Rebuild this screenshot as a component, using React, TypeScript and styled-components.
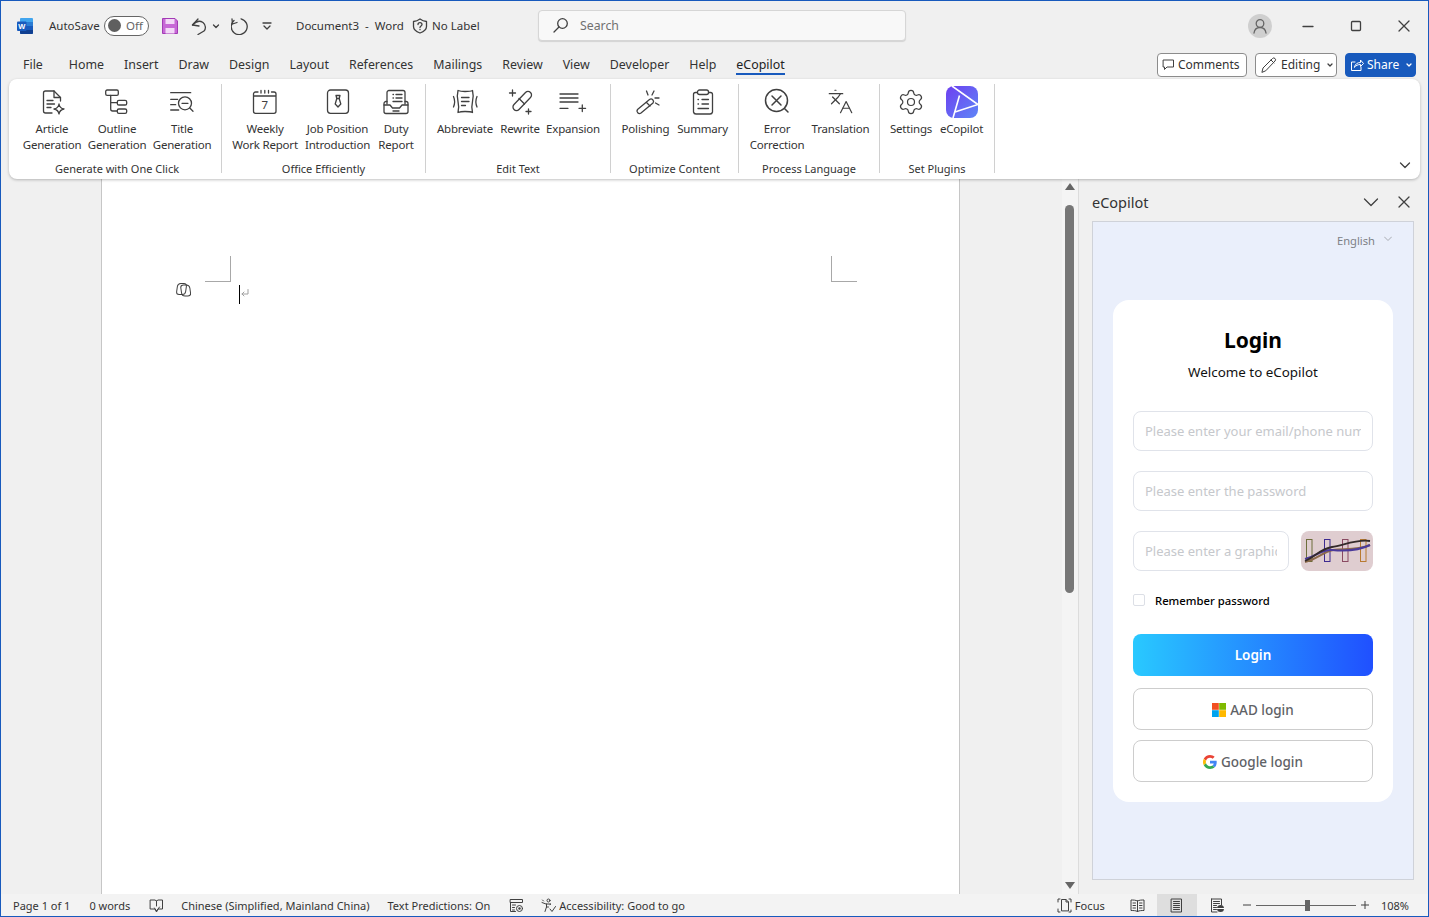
import React from 'react';
import styled, { createGlobalStyle } from 'styled-components';
import { Languages, Settings } from 'lucide-react';

const GlobalStyle = createGlobalStyle`
  html, body, #root {
    margin: 0;
    height: 100%;
    overflow: hidden;
  }
  * {
    box-sizing: border-box;
  }
  body {
    font-family: 'Noto Sans', 'Open Sans', sans-serif;
    color: #333;
  }
`;

const Icon = styled.svg.attrs<{ stroke?: string; strokeWidth?: number | string }>((p) => ({
  fill: 'none',
  stroke: p.stroke ?? '#404040',
  strokeWidth: p.strokeWidth ?? 1.3,
  strokeLinecap: 'round',
  strokeLinejoin: 'round',
}))`
  display: block;
  flex: none;
`;

const Ico = ({ s = 28, children }: { s?: number; children: React.ReactNode }) => (
  <Icon width={s} height={s} viewBox={`0 0 ${s} ${s}`}>
    {children}
  </Icon>
);

const ribbonGroups = [
  {
    label: 'Generate with One Click',
    gap: 7,
    items: [
      {
        w: 58,
        text: ['Article', 'Generation'],
        icon: (
          <Ico>
            <path d="M14 25H7.500a2 2 0 0 1-2-2V5a2 2 0 0 1 2-2H16l6.500 6.500v3.500" />
            <path d="M16 3v6.500h6.500M9 12.500h6M9 16h7.500M9 19.500h4" />
            <path d="M21 16c.5 3 2 4.500 5 5-3 .5-4.500 2-5 5-.5-3-2-4.500-5-5 3-.5 4.500-2 5-5z" />
          </Ico>
        ),
      },
      {
        w: 58,
        text: ['Outline', 'Generation'],
        icon: (
          <Ico>
            <rect x="2.700" y="2" width="12.600" height="5.400" rx="1.400" />
            <rect x="14.300" y="12.400" width="9.400" height="4.600" rx="1.600" />
            <rect x="14.300" y="21" width="9.400" height="4.400" rx="1.600" />
            <path d="M7.700 7.400V21a2 2 0 0 0 2 2h4.600M7.700 14.700h6.600" />
          </Ico>
        ),
      },
      {
        w: 58,
        text: ['Title', 'Generation'],
        icon: (
          <Ico>
            <path d="M2.700 4.700h20M2.700 11.300h7M2.700 16.700h5M2.700 22h8" />
            <circle cx="17" cy="15.300" r="6.500" />
            <path d="M14 15.300h6M21.800 20l3.200 3.200" />
          </Ico>
        ),
      },
    ],
  },
  {
    label: 'Office Efficiently',
    gap: 7,
    items: [
      {
        w: 66,
        text: ['Weekly', 'Work Report'],
        icon: (
          <Ico>
            <path d="M7 4H4.500a2 2 0 0 0-2 2v17.300a2 2 0 0 0 2 2h18.500a2 2 0 0 0 2-2V6a2 2 0 0 0-2-2h-2.500M2.500 8h22.500" />
            <path d="M10 2.500V5M13.800 2.500V5M17.500 2.500V5" />
            <text x="13.800" y="21" fontSize="11.500" fill="#404040" stroke="none" textAnchor="middle" fontFamily="Noto Sans">7</text>
          </Ico>
        ),
      },
      {
        w: 65,
        text: ['Job Position', 'Introduction'],
        icon: (
          <Ico>
            <rect x="3.500" y="2" width="21" height="23.300" rx="3" />
            <path d="M12 7.500h4l-.8 3 1.600 5.500-2.800 3-2.800-3 1.600-5.500z" />
            <path d="M12.800 10.500h2.400" />
          </Ico>
        ),
      },
      {
        w: 38,
        text: ['Duty', 'Report'],
        icon: (
          <Ico>
            <path d="M5 16V4.500a2 2 0 0 1 2-2h14a2 2 0 0 1 2 2V16" />
            <path d="M11 6.500h.5M14 6.500h6M11 10h.5M14 10h6M11 13.500h9" />
            <path d="M5 13.500H4a2 2 0 0 0-2 2v8a2 2 0 0 0 2 2h20a2 2 0 0 0 2-2v-8a2 2 0 0 0-2-2h-1" />
            <path d="M2 17h6l2.500 3h7L20 17h6M11 23h6" />
          </Ico>
        ),
      },
    ],
  },
  {
    label: 'Edit Text',
    gap: 6,
    items: [
      {
        w: 58,
        text: ['Abbreviate'],
        icon: (
          <Ico>
            <path d="M7 2.500c2 .8 3 1 7 1s6-.2 7.500-1c1 4 1 7 0 11s-1 6.500 0 11c-1.500-.8-3.500-1-7.500-1s-5 .2-7 1c1-4.500 1-7 0-11s-1-7 0-11z" />
            <path d="M10.500 9.500h7.500M10.500 13.500h7.500M10.500 17.500h4" />
            <path d="M2.500 8.500c1.500 3.500 1.500 7 0 10.500M26 8.500c-1.500 3.500-1.500 7 0 10.500" />
          </Ico>
        ),
      },
      {
        w: 40,
        text: ['Rewrite'],
        icon: (
          <Ico>
            <path d="M19.500 4.500a3.500 3.500 0 0 1 5 5L13 21.500a3.500 3.500 0 0 1-5-5z" />
            <path d="M13 10.500l5.500 5.500" />
            <path d="M6.500 2v6M3.500 5h6M22.500 21v5M20 23.500h5" />
          </Ico>
        ),
      },
      {
        w: 54,
        text: ['Expansion'],
        icon: (
          <Ico>
            <path d="M1 6h18M1 10h18M1 14h18M1 20.300h8M23.300 17v6.600M20 20.300h6.600" />
          </Ico>
        ),
      },
    ],
  },
  {
    label: 'Optimize Content',
    gap: 7,
    items: [
      {
        w: 49,
        text: ['Polishing'],
        icon: (
          <Ico>
            <path d="M17.500 11.500a2.500 2.500 0 0 1 3.500 3.500L9 25a2.500 2.500 0 0 1-3.500-3.500z" />
            <path d="M14.500 14.500l3.500 3.500" />
            <path d="M14.500 3l1.500 4M22 3l-2 4M27 10h-4M27 17l-3.500-2" />
          </Ico>
        ),
      },
      {
        w: 51,
        text: ['Summary'],
        icon: (
          <Ico>
            <path d="M8 4.500H6.500a2 2 0 0 0-2 2V24a2.500 2.500 0 0 0 2.500 2h14a2.500 2.500 0 0 0 2.500-2V6.500a2 2 0 0 0-2-2H20" />
            <rect x="8.500" y="2" width="11" height="4.500" rx="2" />
            <path d="M9 11.500h.5M13 11.500h6.500M9 16h.5M13 16h6.500M9 20.500h10.500" />
          </Ico>
        ),
      },
    ],
  },
  {
    label: 'Process Language',
    gap: 7,
    items: [
      {
        w: 56,
        text: ['Error', 'Correction'],
        icon: (
          <Ico>
            <circle cx="13.500" cy="12.500" r="11" strokeWidth="1.500" />
            <path d="M9 8l9 9M18 8l-9 9M21.500 20.500l3.500 3.500" strokeWidth="1.500" />
          </Ico>
        ),
      },
      {
        w: 57,
        text: ['Translation'],
        icon: <Languages size={27} strokeWidth={1.05} color="#404040" />,
      },
    ],
  },
  {
    label: 'Set Plugins',
    gap: 7,
    items: [
      {
        w: 42,
        text: ['Settings'],
        icon: <Settings size={28} strokeWidth={1.05} color="#404040" />,
      },
      {
        w: 45,
        text: ['eCopilot'],
        logo: true,
        icon: (
          <svg width="32" height="32" viewBox="0 0 32 32" style={{ display: 'block' }}>
            <defs>
              <linearGradient id="ecopilotGrad" x1="0" y1="0" x2="1" y2="1">
                <stop offset="0" stopColor="#6d3ff0" />
                <stop offset="1" stopColor="#5f86f7" />
              </linearGradient>
            </defs>
            <rect width="32" height="32" rx="8" fill="url(#ecopilotGrad)" />
            <path d="M6 0l26 18.500L9 26M13.500 9.500L7 32" fill="none" stroke="#fff" strokeWidth="1.600" />
          </svg>
        ),
      },
    ],
  },
];

const tabs = ['Home', 'Insert', 'Draw', 'Design', 'Layout', 'References', 'Mailings', 'Review', 'View', 'Developer', 'Help'];

const Window = styled.div`
  width: 1429px;
  height: 917px;
  display: flex;
  flex-direction: column;
  background: #f0f0f0;
  border: 1px solid #185abd;
  overflow: hidden;
`;

const TitleBar = styled.div`
  height: 49px;
  flex: none;
  display: flex;
  align-items: center;
  padding-left: 16px;
  font-size: 11.500px;
  color: #333;
  white-space: nowrap;

  & > * {
    flex: none;
  }
`;

const AutoSave = styled.span`
  margin-left: 16px;
  width: 48px;
`;

const Toggle = styled.div`
  margin-left: 7px;
  width: 45px;
  height: 20px;
  border: 1px solid #666;
  border-radius: 10px;
  background: #fff;
  display: flex;
  align-items: center;
  padding-left: 3px;
  gap: 5px;
  font-size: 11.500px;
  color: #666;

  &::before {
    content: '';
    width: 13px;
    height: 13px;
    border-radius: 50%;
    background: #5f5f5f;
  }
`;

const QuickSlot = styled.div<{ $ml: number }>`
  margin-left: ${(p) => p.$ml}px;
  display: flex;
  align-items: center;
`;

const DocTitle = styled.span`
  margin-left: 24px;
  width: 108px;
  white-space: pre;
`;

const NoLabel = styled.span`
  margin-left: 4px;
  width: 47px;
`;

const SearchBox = styled.div`
  margin-left: 59px;
  width: 368px;
  height: 31px;
  background: #f8f8f8;
  border: 1px solid #d6d6d6;
  border-radius: 4px;
  box-shadow: 0 1px 1px rgba(0, 0, 0, 0.12);
  display: flex;
  align-items: center;
  padding-left: 13px;
  gap: 11px;
  color: #707070;
  font-size: 12.300px;
`;

const Avatar = styled.div`
  margin-left: 342px;
  width: 24px;
  height: 24px;
  border-radius: 50%;
  background: #cfcfcf;
  display: flex;
  align-items: center;
  justify-content: center;
`;

const WinControls = styled.div`
  display: flex;
  margin-left: 12px;
`;

const WinButton = styled.div`
  width: 48px;
  display: flex;
  justify-content: center;
`;

const TabRow = styled.div`
  height: 29px;
  flex: none;
  display: flex;
  align-items: center;
  padding: 0 12px 0 22px;
  font-size: 12.400px;
  color: #333;
`;

const FileTab = styled.span`
  margin-right: 26px;
`;

const Tab = styled.span<{ $active?: boolean }>`
  margin-right: 20px;
  white-space: nowrap;
  color: #333;
  ${(p) => p.$active && 'color: #222; border-bottom: 2px solid #185abd; margin-bottom: -2px;'}
`;

const TabActions = styled.div`
  margin-left: auto;
  display: flex;
  gap: 8px;
  align-items: center;
`;

const ActionButton = styled.div<{ $primary?: boolean; $w: number }>`
  width: ${(p) => p.$w}px;
  height: 24px;
  border-radius: 4px;
  border: 1px solid ${(p) => (p.$primary ? '#185abd' : '#8c8c8c')};
  background: ${(p) => (p.$primary ? '#185abd' : '#fff')};
  color: ${(p) => (p.$primary ? '#fff' : '#333')};
  display: flex;
  align-items: center;
  gap: 3px;
  padding-left: 4px;
  font-size: 12px;
`;

const ActionChevron = styled.span`
  margin-left: 3px;
`;

const Ribbon = styled.div`
  height: 100px;
  flex: none;
  margin: 0 8px;
  background: #fff;
  border-radius: 8px;
  box-shadow: 0 1px 3px rgba(0, 0, 0, 0.25);
  display: flex;
  padding: 5px 0 0 4px;
  position: relative;
  z-index: 1;
`;

const RibbonGroup = styled.div`
  height: 89px;
  padding: 0 10px;
  border-right: 1px solid #d0d0d0;
  display: flex;
  flex-direction: column;
  align-items: center;
`;

const GroupItems = styled.div<{ $gap: number }>`
  flex: 1;
  display: flex;
  gap: ${(p) => p.$gap}px;
`;

const GroupLabel = styled.div`
  font-size: 11px;
  line-height: 16px;
  height: 12px;
  white-space: nowrap;
  color: #333;
`;

const RibbonButton = styled.div<{ $w: number }>`
  width: ${(p) => p.$w}px;
  display: flex;
  flex-direction: column;
  align-items: center;
  font-size: 11.500px;
  letter-spacing: -0.2px;
  line-height: 16px;
  color: #333;
`;

const IconSlot = styled.div<{ $logo?: boolean }>`
  height: 32px;
  padding-top: ${(p) => (p.$logo ? 0 : 4)}px;
  margin-top: ${(p) => (p.$logo ? 2 : 0)}px;
  margin-bottom: ${(p) => (p.$logo ? 3 : 5)}px;
`;

const Label = styled.div`
  white-space: nowrap;
  text-align: center;
`;

const RibbonCollapse = styled.div`
  margin-left: auto;
  align-self: flex-end;
  padding: 0 9px 8px 0;
`;

const Main = styled.div`
  flex: 1;
  min-height: 0;
  display: flex;
`;

const DocArea = styled.div`
  width: 1061px;
  padding-left: 100px;
  flex: none;
  display: flex;
`;

const Page = styled.div`
  width: 859px;
  background: #fff;
  border: solid #c6c6c6;
  border-width: 0 1px;
  padding: 77px 102px 0 73px;
`;

const CropRow = styled.div`
  margin-left: 30px;
  display: flex;
  justify-content: space-between;
`;

const CropMark = styled.div<{ $right?: boolean }>`
  width: 26px;
  height: 26px;
  border-bottom: 1px solid #a8a8a8;
  ${(p) => (p.$right ? 'border-left' : 'border-right')}: 1px solid #a8a8a8;
`;

const TextLine = styled.div`
  display: flex;
  align-items: flex-start;
`;

const Cursor = styled.div`
  margin: 3px 0 0 48px;
  width: 1px;
  height: 19px;
  background: #000;
`;

const ReturnMark = styled.div`
  margin: 7px 0 0 1px;
`;

const ScrollColumn = styled.div`
  width: 16px;
  flex: none;
  background: #f4f4f4;
  display: flex;
  flex-direction: column;
  align-items: center;
  padding: 4px 1px 5px 0;
`;

const ScrollThumb = styled.div`
  width: 9px;
  height: 388px;
  margin-top: 15px;
  border-radius: 5px;
  background: #777;
`;

const ScrollArrow = styled.div<{ $down?: boolean }>`
  width: 0;
  height: 0;
  border-left: 5px solid transparent;
  border-right: 5px solid transparent;
  ${(p) => (p.$down ? 'border-top' : 'border-bottom')}: 7px solid #666;
  ${(p) => p.$down && 'margin-top: auto;'}
`;

const Panel = styled.div`
  flex: 1;
  border-left: 1px solid #dcdcdc;
  display: flex;
  flex-direction: column;
  padding: 0 14px 14px 13px;
`;

const PanelHeader = styled.div`
  height: 42px;
  flex: none;
  display: flex;
  align-items: center;
  font-size: 14.500px;
  color: #333;
  padding-top: 3px;
`;

const PanelActions = styled.div`
  margin-left: auto;
  display: flex;
  align-items: center;
  gap: 19px;
  padding-right: 4px;
`;

const PanelBody = styled.div`
  flex: 1;
  background: #eaeffb;
  border: 1px solid #cfd2d9;
  padding: 0 20px;
`;

const LangRow = styled.div`
  height: 78px;
  padding: 10px 1px 0 0;
  display: flex;
  justify-content: flex-end;
  align-items: flex-start;
  gap: 9px;
  font-size: 11.200px;
  line-height: 18px;
  color: #7d7f85;
`;

const Card = styled.div`
  height: 502px;
  background: #fff;
  border-radius: 16px;
  padding: 0 20px;
  display: flex;
  flex-direction: column;
`;

const CardTitle = styled.h1`
  margin: 24px 0 0;
  font-size: 21px;
  line-height: 32px;
  font-weight: 700;
  text-align: center;
  color: #000;
`;

const CardSubtitle = styled.p`
  margin: 8px 0 0;
  font-size: 13.400px;
  line-height: 16px;
  text-align: center;
  color: #111;
`;

const Input = styled.input`
  display: block;
  width: 100%;
  min-width: 0;
  height: 40px;
  flex: 1 1 0;
  padding: 0 11px;
  border: 1px solid #e0e3ea;
  border-radius: 8px;
  background: #fff;
  font-family: inherit;
  font-size: 13px;
  outline: none;

  &::placeholder {
    color: #c6c8cc;
    opacity: 1;
  }
`;

const Fields = styled.div`
  margin-top: 31px;
  display: flex;
  flex-direction: column;
  gap: 20px;
`;

const FieldRow = styled.div`
  height: 40px;
  display: flex;
  gap: 12px;
`;

const CaptchaImage = styled.div`
  width: 72px;
  height: 40px;
  flex: none;
  border-radius: 8px;
  background: #dfcdd0;
  overflow: hidden;
`;

const RememberRow = styled.label`
  margin-top: 21px;
  height: 16px;
  display: flex;
  align-items: center;
  font-size: 11.300px;
  font-weight: 500;
  color: #000;
`;

const Checkbox = styled.span`
  width: 12px;
  height: 12px;
  margin-right: 10px;
  border: 1px solid #dcdfe6;
  border-radius: 2px;
`;

const LoginButton = styled.button`
  margin-top: 26px;
  height: 42px;
  flex: none;
  border: 0;
  border-radius: 8px;
  background: linear-gradient(90deg, #29c9ff, #2050ff);
  color: #fff;
  font-family: inherit;
  font-size: 13.500px;
  font-weight: 600;
`;

const SsoButton = styled.button`
  margin-top: 12px;
  height: 42px;
  flex: none;
  padding: 2px 0 0;
  border: 1px solid #cdcdcd;
  border-radius: 8px;
  background: #fff;
  color: #606266;
  font-family: inherit;
  font-size: 13.500px;
  font-weight: 500;
  display: flex;
  align-items: center;
  justify-content: center;
  gap: 4px;

  & + & {
    margin-top: 10px;
  }
`;

const StatusBar = styled.div`
  height: 22px;
  flex: none;
  background: #f3f3f3;
  display: flex;
  align-items: center;
  font-size: 11px;
  color: #333;
  white-space: nowrap;
`;

const StatusItem = styled.span<{ $ml: number }>`
  margin-left: ${(p) => p.$ml}px;
  display: flex;
  flex: none;
  align-items: center;
`;

const StatusSpacer = styled.div`
  flex: 1;
`;

const AccessText = styled.span`
  margin-left: 3px;
`;

const FocusText = styled.span`
  margin-left: 3px;
  letter-spacing: 0.1px;
`;

const ViewButton = styled.div<{ $active?: boolean; $ml: number }>`
  margin-left: ${(p) => p.$ml}px;
  width: 40px;
  height: 22px;
  display: flex;
  align-items: center;
  justify-content: center;
  background: ${(p) => (p.$active ? '#dedede' : 'transparent')};
`;

const ZoomTrack = styled.div`
  margin-left: 5px;
  width: 100px;
  height: 1px;
  background: #666;
  display: flex;
  align-items: center;
  padding-left: 49px;

  &::after {
    content: '';
    width: 5px;
    height: 11px;
    background: #666;
  }
`;

const ZoomValue = styled.span`
  margin: 0 19px 0 12px;
`;

export default function App() {
  return (
    <>
      <GlobalStyle />
      <Window>
        <TitleBar>
          <svg width="16" height="16" viewBox="0 0 16 16">
            <rect x="3" width="13" height="16" rx="1" fill="#41a5ee" />
            <rect x="3" y="4" width="13" height="4" fill="#2b7cd3" />
            <rect x="3" y="8" width="13" height="4" fill="#185abd" />
            <path d="M3 12h13v3a1 1 0 0 1-1 1H4a1 1 0 0 1-1-1z" fill="#103f91" />
            <rect y="3.500" width="9.500" height="9.500" rx="1" fill="#185abd" />
            <text x="4.700" y="11" fontSize="7.500" fontWeight="700" fill="#fff" textAnchor="middle" fontFamily="Liberation Sans">W</text>
          </svg>
          <AutoSave>AutoSave</AutoSave>
          <Toggle>Off</Toggle>
          <QuickSlot $ml={13}>
            <svg width="16" height="16" viewBox="0 0 16 16">
              <path d="M.500.500h12.500l2.500 2.500v12.500H.500z" fill="#c768d6" stroke="#a23bb5" />
              <rect x="3.500" y="1" width="9" height="5" fill="#f3d8f7" />
              <rect x="3.500" y="10" width="9" height="5.500" fill="#f3d8f7" />
            </svg>
          </QuickSlot>
          <QuickSlot $ml={12}>
            <Ico s={18}>
              <path d="M8 2L2.500 8l6.500 1" />
              <path d="M2.500 8C6 4 10 3.500 13 5.500c3 2.500 3 6.500 1 8.500l-6 3.500" />
            </Ico>
          </QuickSlot>
          <QuickSlot $ml={4}>
            <Ico s={8}>
              <path d="M1.500 3L4 5.500 6.500 3" />
            </Ico>
          </QuickSlot>
          <QuickSlot $ml={11}>
            <Ico s={18}>
              <path d="M10 1.800A8 8 0 1 1 3 3.500" />
              <path d="M1 2l.5 5 4.500-1.500" />
            </Ico>
          </QuickSlot>
          <QuickSlot $ml={13}>
            <Ico s={10}>
              <path d="M1 2h8M2 5l3 3 3-3" />
            </Ico>
          </QuickSlot>
          <DocTitle>Document3  -  Word</DocTitle>
          <QuickSlot $ml={8}>
            <Ico s={16}>
              <path d="M8 1c2 1.500 4 2.300 6.500 2.500v5c0 3-2.500 5-6.500 6.500-4-1.500-6.500-3.500-6.500-6.500v-5C4 3.300 6 2.500 8 1z" />
              <path d="M6 6.500c0-2.500 4-2.500 4 0 0 1.500-2 1.500-2 3M8 11.500v.2" />
            </Ico>
          </QuickSlot>
          <NoLabel>No Label</NoLabel>
          <SearchBox>
            <Ico s={17}>
              <circle cx="10.500" cy="6.500" r="4.800" />
              <path d="M7 10L2 15" />
            </Ico>
            Search
          </SearchBox>
          <Avatar>
            <Icon width="16" height="16" viewBox="0 0 16 16" stroke="#666">
              <circle cx="8" cy="5.500" r="3.800" />
              <path d="M2 15c.5-3.500 2.500-5.500 6-5.500s5.500 2 6 5.500" />
            </Icon>
          </Avatar>
          <WinControls>
            <WinButton>
              <Ico s={12}>
                <path d="M1 6.500h10" />
              </Ico>
            </WinButton>
            <WinButton>
              <Ico s={12}>
                <rect x="1.500" y="1.500" width="9" height="9" rx="1" />
              </Ico>
            </WinButton>
            <WinButton>
              <Ico s={12}>
                <path d="M1 1l10 10M11 1L1 11" />
              </Ico>
            </WinButton>
          </WinControls>
        </TitleBar>
        <TabRow>
          <FileTab>File</FileTab>
          {tabs.map((t) => (
            <Tab key={t}>{t}</Tab>
          ))}
          <Tab $active>eCopilot</Tab>
          <TabActions>
            <ActionButton $w={90}>
              <Ico s={13}>
                <path d="M1.500 2h10v7H5l-2.500 2.500V9h-1z" strokeWidth="1" />
              </Ico>
              Comments
            </ActionButton>
            <ActionButton $w={82}>
              <Ico s={18}>
                <path d="M2 16l1-4L12.500 2.500a1.500 1.500 0 0 1 2.500 2.500L6 14.500zM11 4l3 3" strokeWidth="1" />
              </Ico>
              Editing
              <ActionChevron>
                <Ico s={8}>
                  <path d="M2 3l2 2 2-2" />
                </Ico>
              </ActionChevron>
            </ActionButton>
            <ActionButton $primary $w={71}>
              <Icon width="14" height="14" viewBox="0 0 14 14" stroke="#fff" strokeWidth="1">
                <path d="M5 4H1.500v8.500H11V9M4.500 9c.5-3 3-4.500 6-4.500V2L13.500 5.500 10.500 8.500V6.500c-2.500 0-4.500 1-6 2.500z" />
              </Icon>
              Share
              <ActionChevron>
                <Icon width="8" height="8" viewBox="0 0 8 8" stroke="#fff">
                  <path d="M2 3l2 2 2-2" />
                </Icon>
              </ActionChevron>
            </ActionButton>
          </TabActions>
        </TabRow>
        <Ribbon>
          {ribbonGroups.map((g) => (
            <RibbonGroup key={g.label}>
              <GroupItems $gap={g.gap}>
                {g.items.map((b) => (
                  <RibbonButton key={b.text.join(' ')} $w={b.w}>
                    <IconSlot $logo={'logo' in b}>{b.icon}</IconSlot>
                    {b.text.map((line) => (
                      <Label key={line}>{line}</Label>
                    ))}
                  </RibbonButton>
                ))}
              </GroupItems>
              <GroupLabel>{g.label}</GroupLabel>
            </RibbonGroup>
          ))}
          <RibbonCollapse>
            <Ico s={12}>
              <path d="M1.500 4L6 8.500 10.500 4" />
            </Ico>
          </RibbonCollapse>
        </Ribbon>
        <Main>
          <DocArea>
            <Page>
              <CropRow>
                <CropMark />
                <CropMark $right />
              </CropRow>
              <TextLine>
                <Ico s={16}>
                  <rect x="2.500" y="1.500" width="9" height="11" rx="3" transform="skewX(-8) translate(.5 0)" strokeWidth="1" />
                  <rect x="6" y="3" width="9" height="11" rx="3" transform="skewX(8) translate(-1 0)" strokeWidth="1" />
                </Ico>
                <Cursor />
                <ReturnMark>
                  <Icon width="8" height="8" viewBox="0 0 8 8" stroke="#a0a0a0" strokeWidth="1">
                    <path d="M7 .5V5H1M3 3L1 5l2 2" />
                  </Icon>
                </ReturnMark>
              </TextLine>
            </Page>
          </DocArea>
          <ScrollColumn>
            <ScrollArrow />
            <ScrollThumb />
            <ScrollArrow $down />
          </ScrollColumn>
          <Panel>
            <PanelHeader>
              eCopilot
              <PanelActions>
                <Ico s={16}>
                  <path d="M1.500 5l6.500 6.500L14.500 5" />
                </Ico>
                <Ico s={12}>
                  <path d="M1 1l10 10M11 1L1 11" />
                </Ico>
              </PanelActions>
            </PanelHeader>
            <PanelBody>
              <LangRow>
                English
                <Icon width="8" height="14" viewBox="0 0 8 14" stroke="#a8abb2" strokeWidth="1">
                  <path d="M.5 5L4 8.500 7.500 5" />
                </Icon>
              </LangRow>
              <Card>
                <CardTitle>Login</CardTitle>
                <CardSubtitle>Welcome to eCopilot</CardSubtitle>
                <Fields>
                  <FieldRow>
                    <Input placeholder="Please enter your email/phone number" />
                  </FieldRow>
                  <FieldRow>
                    <Input placeholder="Please enter the password" />
                  </FieldRow>
                  <FieldRow>
                    <Input placeholder="Please enter a graphic verification code" />
                    <CaptchaImage>
                      <svg width="72" height="40" viewBox="0 0 72 40" fill="none">
                        <rect x="5.500" y="8.500" width="5.500" height="22" stroke="#6d6d3a" />
                        <rect x="23.500" y="8.500" width="5.500" height="22" stroke="#3c2a90" />
                        <rect x="41.500" y="8.500" width="5.500" height="22" stroke="#8a4a62" />
                        <rect x="59.500" y="8.500" width="5.500" height="22" stroke="#b87a30" />
                        <path d="M4 31c12-3 18-10 28-12s22 1 37-5" stroke="#8c6a4a" strokeWidth="2" />
                        <path d="M4 28c14-4 17-10 27-9s24 2 38-5" stroke="#4b3a9a" strokeWidth="2" />
                        <path d="M4 30c10-4 15-12 27-14s25-8 38-6" stroke="#332a2a" strokeWidth="1.800" />
                      </svg>
                    </CaptchaImage>
                  </FieldRow>
                </Fields>
                <RememberRow>
                  <Checkbox />
                  Remember password
                </RememberRow>
                <LoginButton>Login</LoginButton>
                <SsoButton>
                  <svg width="14" height="14" viewBox="0 0 14 14">
                    <rect width="6.800" height="6.800" fill="#f25022" />
                    <rect x="7.200" width="6.800" height="6.800" fill="#7fba00" />
                    <rect y="7.200" width="6.800" height="6.800" fill="#00a4ef" />
                    <rect x="7.200" y="7.200" width="6.800" height="6.800" fill="#ffb900" />
                  </svg>
                  AAD login
                </SsoButton>
                <SsoButton>
                  <svg width="14" height="14" viewBox="0 0 48 48">
                    <path fill="#ea4335" d="M24 9.500c3.500 0 6.600 1.200 9.100 3.600l6.800-6.800C35.800 2.500 30.400 0 24 0 14.600 0 6.500 5.400 2.600 13.200l7.900 6.200C12.400 13.700 17.700 9.500 24 9.500z" />
                    <path fill="#4285f4" d="M47 24.500c0-1.600-.1-3.100-.4-4.500H24v9h12.900c-.6 3-2.200 5.500-4.700 7.200l7.700 6C44.400 38 47 31.800 47 24.500z" />
                    <path fill="#fbbc05" d="M10.500 28.600c-.5-1.400-.8-3-.8-4.600s.3-3.200.8-4.600l-7.900-6.200C.9 16.500 0 20.100 0 24s.9 7.500 2.600 10.800z" />
                    <path fill="#34a853" d="M24 48c6.500 0 11.900-2.100 15.900-5.800l-7.700-6c-2.200 1.500-4.900 2.300-8.200 2.300-6.300 0-11.600-4.200-13.500-9.900l-7.900 6.200C6.500 42.600 14.600 48 24 48z" />
                  </svg>
                  Google login
                </SsoButton>
              </Card>
            </PanelBody>
          </Panel>
        </Main>
        <StatusBar>
          <StatusItem $ml={12}>Page 1 of 1</StatusItem>
          <StatusItem $ml={19}>0 words</StatusItem>
          <StatusItem $ml={19}>
            <Ico s={15}>
              <path d="M1.500 2h4.500l1.500 1 1.500-1h4.500v9H9l-1.500 3-1.500-3H1.500zM7.500 3v5M5.500 10l2 3 3-4" strokeWidth="1" />
            </Ico>
          </StatusItem>
          <StatusItem $ml={17}>Chinese (Simplified, Mainland China)</StatusItem>
          <StatusItem $ml={18}>Text Predictions: On</StatusItem>
          <StatusItem $ml={19}>
            <Ico s={15}>
              <path d="M1.500 1.500h12v3h-12zM1.500 4.500v9h5M3.500 7h3M3.500 9.500h2M3.500 12h2" strokeWidth="1" />
              <circle cx="10.500" cy="10.500" r="3" strokeWidth="1" />
              <circle cx="10.500" cy="10.500" r="1.200" fill="#404040" stroke="none" />
            </Ico>
          </StatusItem>
          <StatusItem $ml={17}>
            <Ico s={15}>
              <circle cx="7.500" cy="2.500" r="1.500" strokeWidth="1" />
              <path d="M1 4.500l4 1.500h5l-1 .5M5.500 6v3L4 13.500M7.500 9H5.500M1.500 2l1 1M9 11l2 2.500 3.500-5" strokeWidth="1" />
            </Ico>
            <AccessText>Accessibility: Good to go</AccessText>
          </StatusItem>
          <StatusSpacer />
          <StatusItem $ml={0}>
            <Ico s={15}>
              <path d="M1 4V1h2M12 1h2v3M14 12v2h-2M3 14H1v-3M4.500 12.500v-11H9l2.500 2.500v8.500zM9 1.500V4h2.500" strokeWidth="1" />
            </Ico>
            <FocusText>Focus</FocusText>
          </StatusItem>
          <StatusItem $ml={25}>
            <Ico s={15}>
              <path d="M7.500 3c-2-1-4-1-6.500-1v10.500c2.500 0 4.500 0 6.500 1 2-1 4-1 6.500-1V2c-2.500 0-4.500 0-6.500 1zM7.500 3v10.500M3 5h2.500M3 7.500h2.500M3 10h2.500M9.500 5H12M9.500 7.500H12M9.500 10H12" strokeWidth="1" />
            </Ico>
          </StatusItem>
          <ViewButton $active $ml={12}>
            <Ico s={15}>
              <path d="M2.500 1h10v13h-10zM4.500 3.500h6M4.500 5.500h6M4.500 7.500h6M4.500 9.500h6M4.500 11.500h6" strokeWidth="1" />
            </Ico>
          </ViewButton>
          <StatusItem $ml={13}>
            <Ico s={15}>
              <path d="M1.500 1h10v6M7 14H1.500V1M3.500 3.500h6M3.500 5.500h6M3.500 7.500h3M3.500 9.500h3M3.500 11.500h3" strokeWidth="1" />
              <circle cx="10.500" cy="10.500" r="3.500" fill="#404040" stroke="none" />
              <path d="M7 10.500h7" stroke="#fff" strokeWidth="1" />
            </Ico>
          </StatusItem>
          <StatusItem $ml={18}>
            <Ico s={8}>
              <path d="M0 4h8" strokeWidth="1" />
            </Ico>
          </StatusItem>
          <ZoomTrack />
          <StatusItem $ml={5}>
            <Ico s={8}>
              <path d="M0 4h8M4 0v8" strokeWidth="1" />
            </Ico>
          </StatusItem>
          <ZoomValue>108%</ZoomValue>
        </StatusBar>
      </Window>
    </>
  );
}
